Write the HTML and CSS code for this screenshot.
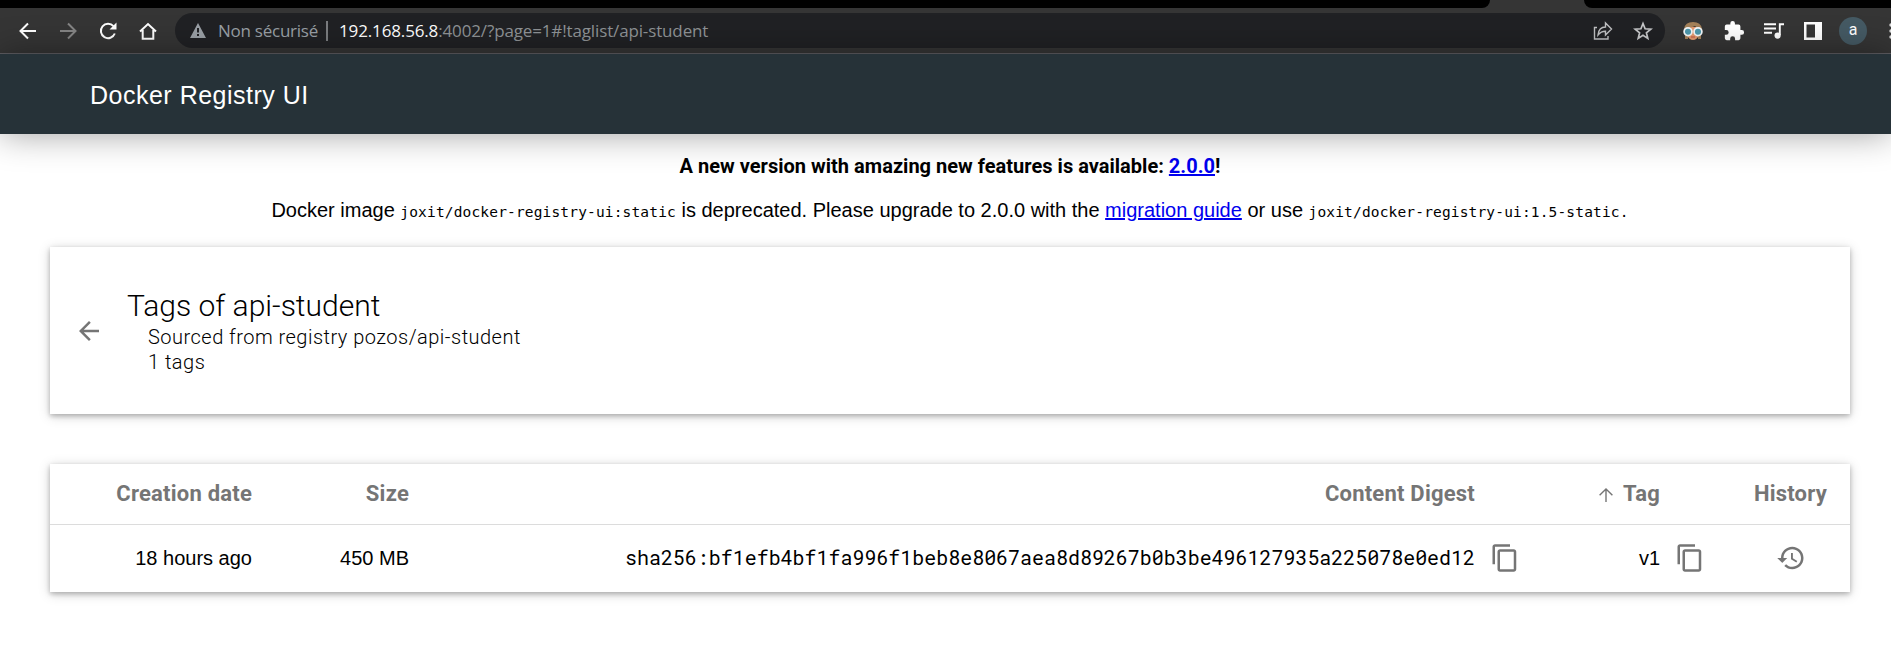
FILE: index.html
```html
<!DOCTYPE html>
<html lang="fr">
<head>
<meta charset="utf-8">
<title>Docker Registry UI</title>
<link rel="stylesheet" href="styles.css">
</head>
<body>
<div class="tabs"><div class="tab-left"></div><div class="tab-right"></div></div>
<div class="toolbar">
  <div class="nav">
    <svg width="20" height="20" viewBox="0 0 20 20" class="ic w"><path d="M18 10H3M10 2.500L2.500 10l7.500 7.500"/></svg>
    <svg width="20" height="20" viewBox="0 0 20 20" class="ic g"><path d="M2 10h15M10 2.500L17.500 10 10 17.500"/></svg>
    <svg width="20" height="20" viewBox="0 0 20 20" class="ic w"><path d="M16.800 12.500A7.200 7.200 0 1 1 15.500 5.200"/><path class="fill" d="M18.500 1.500v7h-7z"/></svg>
    <svg width="20" height="20" viewBox="0 0 20 20" class="ic w"><path d="M2 10.500L10 3l8 7.500M4.700 9v8.700h10.600V9"/></svg>
  </div>
  <div class="omnibox">
    <svg class="warn" width="16" height="15" viewBox="0 0 16 15"><path fill="#9aa0a6" d="M8 0l8 15H0z"/><path stroke="#202124" stroke-width="2" d="M8 5v4.500M8 11v2"/></svg>
    <span class="unsafe">Non sécurisé</span><span class="bar"></span>
    <span class="url"><b>192.168.56.8</b>:4002/?page=1#!taglist/api-student</span>
    <svg class="share" width="20" height="20" viewBox="0 0 20 20"><path fill="none" stroke="#c0c1c3" stroke-width="1.400" d="M4 6.500H1.500V18H15v-3M5 14c.5-5 3-8 7.500-8V2l6 6-6 6v-3.700c-3.500 0-5.500 1.200-7.500 3.700z"/></svg>
    <svg class="star" width="20" height="20" viewBox="0 0 20 20"><path fill="none" stroke="#c7c8ca" stroke-width="1.700" d="M10 2.500l2.100 5.300 5.700.4-4.400 3.600 1.400 5.600-4.800-3.100-4.800 3.100 1.400-5.600-4.400-3.600 5.700-.4z"/></svg>
  </div>
  <div class="ext">
    <svg width="20" height="20" viewBox="0 0 20 20"><path fill="#e59a6f" d="M4 6h12v8q-2 5-6 5t-6-5z"/><path fill="#a5825a" d="M1 13V8q1-7 9-7t9 7v5l-3-3V8L12 5 4 8v3z"/><path fill="#a5825a" d="M2 13h3v5H2zM15 13h3v5h-3z"/><path stroke="#c65f49" stroke-width="1.200" d="M8 16h4"/><g fill="#4d98ad" stroke="#f4f8fa" stroke-width="1.700"><circle cx="5" cy="10.700" r="3.900"/><circle cx="15" cy="10.700" r="3.900"/></g></svg>
    <svg width="22" height="22" viewBox="0 0 24 24"><path fill="#fff" d="M20.500 11H19V7a2 2 0 0 0-2-2h-4V3.500a2.500 2.500 0 0 0-5 0V5H4a2 2 0 0 0-2 2v3.800h1.500a2.700 2.700 0 0 1 0 5.400H2V20a2 2 0 0 0 2 2h3.800v-1.500a2.700 2.700 0 0 1 5.400 0V22H17a2 2 0 0 0 2-2v-4h1.500a2.500 2.500 0 0 0 0-5z"/></svg>
    <svg width="20" height="20" viewBox="0 0 20 20"><path fill="none" stroke="#fff" stroke-width="1.900" d="M0 3.200h12M0 7.500h12M0 11.800h8M20 3.200h-4.200V14"/><circle fill="#fff" cx="13.600" cy="14.600" r="3.100"/></svg>
    <svg width="20" height="20" viewBox="0 0 20 20"><path fill="#fff" fill-rule="evenodd" d="M1 1h18v18H1zM3.500 3.500v13h8.500v-13z"/></svg>
    <span class="avatar">a</span>
    <svg class="dots" width="4" height="20" viewBox="0 0 4 20"><g fill="#ddd"><circle cx="2" cy="4" r="1.700"/><circle cx="2" cy="10" r="1.700"/><circle cx="2" cy="16" r="1.700"/></g></svg>
  </div>
</div>
<header class="header">Docker Registry UI</header>
<main>
  <p class="notice strong">A new version with amazing new features is available: <a href="#">2.0.0</a>!</p>
  <p class="notice"><span class="arial">Docker image <code>joxit/docker-registry-ui:static</code> is deprecated. Please upgrade to 2.0.0 with the <a href="#">migration guide</a> or use <code>joxit/docker-registry-ui:1.5-static.</code></span></p>
  <section class="card title-card">
    <svg class="back" width="20" height="20" viewBox="4 4 16 16"><path fill="#757575" d="M20 11H7.830l5.590-5.590L12 4l-8 8 8 8 1.410-1.410L7.830 13H20v-2z"/></svg>
    <div class="title">
      <h2>Tags of api-student</h2>
      <div class="sub">Sourced from registry pozos/api-student</div>
      <div class="sub">1 tags</div>
    </div>
  </section>
  <section class="card table">
    <div class="row head">
      <span>Creation date</span><span>Size</span><span>Content Digest</span><span></span>
      <span class="tag"><svg width="14" height="14" viewBox="0 0 14 14"><path fill="none" stroke="#757575" stroke-width="1.400" d="M7 14V1.200M.6 7.300L7 1l6.400 6.300"/></svg>Tag</span><span></span><span>History</span>
    </div>
    <div class="row body">
      <span>18 hours ago</span><span>450 MB</span><span class="sha">sha256:bf1efb4bf1fa996f1beb8e8067aea8d89267b0b3be496127935a225078e0ed12</span>
      <span class="copy"><svg width="30" height="30" viewBox="0 0 24 24"><path fill="#757575" d="M16 1H4c-1.100 0-2 .9-2 2v14h2V3h12V1zm3 4H8c-1.100 0-2 .9-2 2v14c0 1.100.9 2 2 2h11c1.100 0 2-.9 2-2V7c0-1.100-.9-2-2-2zm0 16H8V7h11v14z"/></svg></span>
      <span>v1</span>
      <span class="copy"><svg width="30" height="30" viewBox="0 0 24 24"><path fill="#757575" d="M16 1H4c-1.100 0-2 .9-2 2v14h2V3h12V1zm3 4H8c-1.100 0-2 .9-2 2v14c0 1.100.9 2 2 2h11c1.100 0 2-.9 2-2V7c0-1.100-.9-2-2-2zm0 16H8V7h11v14z"/></svg></span>
      <span class="history"><svg width="30" height="30" viewBox="0 0 24 24"><path fill="#757575" d="M13 3c-4.970 0-9 4.030-9 9H1l3.890 3.890.07.14L9 12H6c0-3.870 3.130-7 7-7s7 3.130 7 7-3.130 7-7 7c-1.930 0-3.680-.79-4.940-2.060l-1.420 1.420C8.270 19.990 10.510 21 13 21c4.970 0 9-4.030 9-9s-4.030-9-9-9zm-1 5v5l4.280 2.540.72-1.210-3.500-2.080V8H12z"/></svg></span>
    </div>
  </section>
</main>
</body>
</html>
```

FILE: styles.css
```css
* { box-sizing: border-box; }
body { margin: 0; height: 650px; overflow: hidden; background: #fff; color: #000; font: 20px/25px Roboto, sans-serif; }
svg { display: block; flex: none; }
.tabs { height: 8px; background: #353535; display: flex; justify-content: space-between; }
.tab-left { width: 1490px; background: #000; border-bottom-right-radius: 10px; }
.tab-right { width: 307px; background: #000; border-bottom-left-radius: 10px; }
.toolbar { height: 46px; background: #353535; border-bottom: 1px solid #5f5e63; display: flex; align-items: center; overflow: hidden; }
.nav { display: flex; gap: 20px; padding-left: 18px; width: 175px; flex: none; }
.ic { fill: none; stroke-width: 2; }
.w { stroke: #fff; }
.g { stroke: #858585; }
.ic .fill { fill: #fff; stroke: none; }
.omnibox { width: 1490px; height: 35px; border-radius: 18px; background: #202124; display: flex; align-items: center; flex: none; padding: 0 12px 0 15px; font: 17px/35px "Open Sans", sans-serif; color: #9aa0a6; white-space: nowrap; letter-spacing: -.14px; }
.unsafe { margin-left: 12px; width: 99px; letter-spacing: -.25px; }
.bar { width: 2px; height: 20px; background: #7b7d80; margin: 0 11px 0 9px; }
.url { flex: 1; color: #8f9396; }
.url b { color: #fff; font-weight: 400; }
.share { margin-right: 20px; }
.ext { display: flex; align-items: center; padding-left: 18px; gap: 20px; flex: none; }
.ext svg + svg { margin-right: -1px; }
.avatar { width: 28px; height: 28px; border-radius: 50%; background: #455a64; color: #fff; font-size: 16px; line-height: 26px; text-align: center; margin-left: -3px; }
.dots { margin-left: 2px; }
.header { height: 80px; padding: 3px 0 0 90px; background: #263238; color: #fff; font: 25px/77px "Liberation Sans", Arial, sans-serif; box-shadow: 0 0 35px rgba(0, 0, 0, .38); position: relative; letter-spacing: .5px; }
main { padding: 20px 41px 0 50px; }
.notice { margin: 0 0 19px; text-align: center; white-space: nowrap; }
.strong { font-weight: 700; letter-spacing: .02px; }
.arial { font-family: "Liberation Sans", Arial, sans-serif; }
a { color: #00e; text-decoration-thickness: 2px; }
code { font: 14.5px "DejaVu Sans Mono", monospace; letter-spacing: .16px; }
.card { background: #fff; box-shadow: 0 2px 5px rgba(0, 0, 0, .26), 0 2px 12px rgba(0, 0, 0, .16); }
.title-card { height: 167px; margin-top: 24px; display: flex; align-items: center; padding-left: 29px; }
.title { margin-left: 28px; font-weight: 300; }
h2 { margin: 0 0 1px; padding-top: 1px; font: 300 30px/34px Roboto, sans-serif; }
.sub { padding-left: 21px; letter-spacing: .48px; position: relative; top: 1px; }
.table { margin-top: 50px; }
.row { display: grid; grid-template-columns: 202px 157px 1066px 60px 125px 60px 107px; align-items: center; text-align: right; }
.head { height: 61px; padding-bottom: 2px; border-bottom: 1px solid #dcdcdc; color: #757575; font-weight: 700; font-size: 22px; letter-spacing: .22px; }
.body { height: 67px; padding-bottom: 1px; font-family: "Liberation Sans", Arial, sans-serif; }
.tag { display: flex; justify-content: flex-end; align-items: center; gap: 10px; }
.tag svg { position: relative; top: 2px; }
.sha { font: 20px/25px "Roboto Mono", "DejaVu Sans Mono", monospace; letter-spacing: -.03px; padding-bottom: 2px; }
.copy { padding-left: 15px; }
.history { padding-left: 56px; }
```
